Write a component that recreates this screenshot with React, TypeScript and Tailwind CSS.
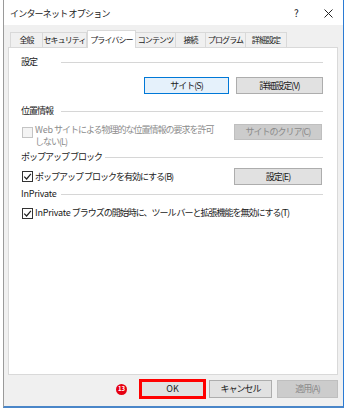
import React from "react";

const font = { fontFamily: '"Noto Sans CJK JP", "Noto Sans", sans-serif' };

function Header({ label, top }: { label: React.ReactNode; top: string }) {
  return (
    <div className={`flex items-center h-[12px] ${top}`}>
      <span className="min-w-[37px] mr-[3px] whitespace-nowrap text-[#1a1a1a]">{label}</span>
      <div className="flex-1 h-px bg-[#d6d6d6]" />
    </div>
  );
}

function Check({ checked, disabled }: { checked?: boolean; disabled?: boolean }) {
  return (
    <div
      className={`w-[11px] h-[11px] shrink-0 border flex items-center justify-center ${
        disabled ? "border-[#c4c4c4] bg-[#f4f4f4]" : "border-[#333333] bg-white"
      }`}
    >
      {checked && (
        <svg width="9" height="9" viewBox="0 0 9 9">
          <path d="M1.2 4.6 L3.6 7 L7.9 1.8" fill="none" stroke="#222" strokeWidth="1.2" />
        </svg>
      )}
    </div>
  );
}

function Btn({ label, w, h = "h-[17px]", focused, disabled }: { label: string; w: string; h?: string; focused?: boolean; disabled?: boolean }) {
  return (
    <div
      className={`${w} ${h} flex items-center justify-center border whitespace-nowrap ${
        disabled
          ? "bg-[#cccccc] border-[#bfbfbf] text-[#8a8a8a]"
          : focused
          ? "bg-[#e5f1fb] border-[#0078d7] text-[#1a1a1a]"
          : "bg-[#e1e1e1] border-[#adadad] text-[#1a1a1a]"
      }`}
    >
      {label}
    </div>
  );
}

const tabs = [
  { l: "全般", w: "w-[33px]" },
  { l: "セキュリティ", w: "w-[45px]" },
  { l: "プライバシー", w: "w-[49px]", sel: true },
  { l: "コンテンツ", w: "w-[41px]" },
  { l: "接続", w: "w-[31px]" },
  { l: "プログラム", w: "w-[41px]" },
  { l: "詳細設定", w: "w-[42px]" },
];

const L = ({ children }: { children: React.ReactNode }) => <span className="tracking-[-0.2px]">{children}</span>;

export default function App() {
  return (
    <div className="w-[350px] h-[412px] bg-white text-[9px] tracking-[-1px] leading-[12px] text-[#1a1a1a]" style={font}>
      <div className="ml-[3px] w-[341px] h-[408px] border-l border-l-[#9a9a9a] border-r border-r-[#2b7bd3] border-b-2 border-b-[#4a86c8] flex flex-col">
        {/* title bar */}
        <div className="h-[25px] bg-white flex items-start pt-[8px] pl-[6px] relative">
          <span className="text-[9px] tracking-[-0.8px]">インターネット オプション</span>
          <span className="absolute left-[290px] top-[7px] text-[10px] tracking-normal">?</span>
          <svg className="absolute left-[320px] top-[9px]" width="9" height="9" viewBox="0 0 9 9">
            <path d="M0.5 0.5 L8.5 8.5 M8.5 0.5 L0.5 8.5" stroke="#222" strokeWidth="1" />
          </svg>
        </div>
        {/* body */}
        <div className="flex-1 bg-[#f0f0f0] flex flex-col pl-[4px] pr-[5px]">
          {/* tabs */}
          <div className="flex items-end h-[22px] pl-[2px] text-[8px] tracking-[-0.9px]">
            {tabs.map((t) =>
              t.sel ? (
                <div
                  key={t.l}
                  className={`${t.w} h-[18px] bg-white border border-[#d9d9d9] border-b-0 -mb-px relative z-10 flex items-center justify-center whitespace-nowrap`}
                >
                  {t.l}
                </div>
              ) : (
                <div
                  key={t.l}
                  className={`${t.w} h-[15px] bg-[#f0f0f0] border border-[#d9d9d9] border-b-0 -ml-px first:ml-0 flex items-center justify-center whitespace-nowrap overflow-visible`}
                >
                  {t.l}
                </div>
              )
            )}
          </div>
          {/* panel */}
          <div className="h-[328px] bg-white border border-[#d9d9d9] pl-[12px] pr-[14px] pt-[8px] flex flex-col">
            <Header label="設定" top="" />
            <div className="flex justify-end gap-[7px] mt-[9px]">
              <Btn label="サイト(S)" w="w-[85px]" focused />
              <Btn label="詳細設定(V)" w="w-[87px]" />
            </div>
            <Header label="位置情報" top="mt-[11px]" />
            <div className="flex items-start justify-between mt-[7px]">
              <div className="flex items-start gap-[2px] text-[#8c8c8c]">
                <div className="mt-[3px] ml-[1px]">
                  <Check disabled />
                </div>
                <div className="leading-[12px] whitespace-nowrap">
                  <L>Web</L> サイトによる物理的な位置情報の要求を許可
                  <br />
                  しない(L)
                </div>
              </div>
              <div className="mr-[1px]">
                <Btn label="サイトのクリア(C)" w="w-[88px]" h="h-[16px]" disabled />
              </div>
            </div>
            <Header label="ポップアップ ブロック" top="mt-[3px]" />
            <div className="flex items-center justify-between mt-[5px]">
              <div className="flex items-center gap-[2px]">
                <div className="ml-[1px]">
                  <Check checked />
                </div>
                <span className="whitespace-nowrap">ポップアップ ブロックを有効にする(B)</span>
              </div>
              <div className="mr-[1px]">
                <Btn label="設定(E)" w="w-[88px]" />
              </div>
            </div>
            <Header label={<L>InPrivate</L>} top="mt-[3px]" />
            <div className="flex items-center gap-[2px] mt-[7px] h-[12px]">
              <div className="ml-[1px]">
                <Check checked />
              </div>
              <span className="whitespace-nowrap">
                <L>InPrivate</L> ブラウズの開始時に、ツール バーと拡張機能を無効にする(T)
              </span>
            </div>
          </div>
          {/* bottom buttons */}
          <div className="flex items-center mt-[4px]">
            <div className="ml-[108px] w-[11px] h-[11px] rounded-full bg-[#e60012] flex items-center justify-center text-white text-[6px] font-bold leading-none tracking-normal">
              13
            </div>
            <div className="ml-[12px] w-[67px] h-[20px] border-[3px] border-[#ff0000] bg-[#e1e1e1] flex items-center justify-center tracking-normal">
              OK
            </div>
            <div className="ml-[3px]">
              <Btn label="キャンセル" w="w-[63px]" h="h-[18px]" />
            </div>
            <div className="ml-[5px]">
              <Btn label="適用(A)" w="w-[61px]" h="h-[18px]" disabled />
            </div>
          </div>
        </div>
      </div>
    </div>
  );
}
